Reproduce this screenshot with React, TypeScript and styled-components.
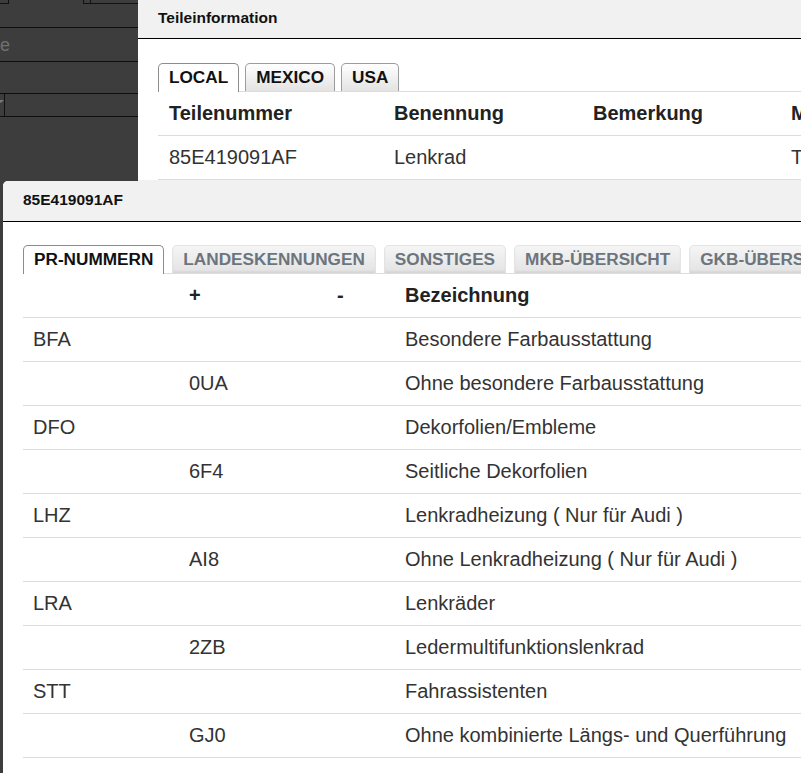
import React from "react";
import styled, { createGlobalStyle } from "styled-components";

const GlobalStyle = createGlobalStyle`
  html, body { margin: 0; padding: 0; }
  body {
    background: #3d3d3d;
    font-family: "Liberation Sans", Arial, sans-serif;
    overflow: hidden;
  }
`;

const Page = styled.div`
  position: relative;
  width: 801px;
  height: 773px;
  overflow: hidden;
  display: grid;
  grid-template-columns: 138px 760px;
  align-items: start;
`;

/* ---------- dimmed background app (left) ---------- */
const Sidebar = styled.div`
  display: flex;
  flex-direction: column;
`;

const SideRow = styled.div<{ $h: number }>`
  height: ${(p) => p.$h}px;
  border-bottom: 1px solid #0e0e0e;
  display: flex;
  align-items: center;
  position: relative;
`;

const TopStrip = styled.div`
  display: flex;
  height: 4px;
  align-self: flex-start;
  width: 100%;
`;

const StripBox = styled.div<{ $w: number; $ml?: number; $sides?: boolean }>`
  width: ${(p) => p.$w}px;
  margin-left: ${(p) => p.$ml ?? 0}px;
  border-bottom: 1px solid #111;
  border-right: ${(p) => (p.$sides ? "1px solid #111" : "none")};
  border-left: ${(p) => (p.$sides && p.$ml ? "1px solid #111" : "none")};
  flex: ${(p) => (p.$w === 0 ? 1 : "none")};
`;

const FadedText = styled.span`
  font-size: 18px;
  color: #707070;
  margin-top: 2px;
`;

const DropCell = styled.div`
  width: 4px;
  height: 100%;
  border-right: 1px solid #111;
  display: flex;
  align-items: center;
  overflow: hidden;
`;

const DropArrow = styled.div`
  width: 0;
  height: 0;
  border-left: 3px solid transparent;
  border-right: 3px solid transparent;
  border-top: 3px solid #777;
  margin-left: -2px;
  margin-top: -8px;
`;

/* ---------- panels ---------- */
const InfoPanel = styled.section`
  background: #f1f1f1;
  height: 773px;
  display: flex;
  flex-direction: column;
`;

const PanelHeader = styled.header<{ $h: number }>`
  height: ${(p) => p.$h}px;
  line-height: ${(p) => p.$h - 2}px;
  background: #f1f1f1;
  border-bottom: 1px solid #000;
  padding-left: 20px;
  font-size: 15.5px;
  font-weight: bold;
  color: #111;
  flex: none;
`;

const PanelBody = styled.div<{ $top: number }>`
  background: #fff;
  padding: ${(p) => p.$top}px 0 0 20px;
`;

const PanelFooter = styled.div`
  flex: 1;
  background: #f1f1f1;
`;

const Dialog = styled.section`
  position: absolute;
  top: 181px;
  left: 3px;
  width: 900px;
  bottom: 0;
  background: #fff;
  border-radius: 5px 0 0 0;
  overflow: hidden;
  display: flex;
  flex-direction: column;
`;

/* ---------- tabs ---------- */
const TabBar = styled.div<{ $gap: number }>`
  display: flex;
  align-items: flex-end;
  gap: ${(p) => p.$gap}px;
  height: 28px;
  border-bottom: 1px solid #dcdcdc;
`;

type Tone = "bordered" | "muted";

const Tab = styled.div<{ $active?: boolean; $tone: Tone }>`
  box-sizing: border-box;
  height: ${(p) => (p.$active ? 29 : 28)}px;
  margin-bottom: ${(p) => (p.$active ? -1 : 0)}px;
  padding: 0 10px;
  line-height: 27px;
  font-size: 17.2px;
  font-weight: bold;
  white-space: nowrap;
  border-radius: 5px 5px 0 0;
  border: 1px solid
    ${(p) => (p.$active ? "#8c8c8c" : p.$tone === "bordered" ? "#9c9c9c" : "#e4e4e4")};
  border-bottom: none;
  color: ${(p) => (p.$active ? "#111" : p.$tone === "bordered" ? "#111" : "#6c757d")};
  background: ${(p) =>
    p.$active
      ? "#fff"
      : p.$tone === "bordered"
      ? "linear-gradient(#ffffff, #e3e3e3)"
      : "linear-gradient(#f5f5f5, #e3e3e3)"};
  box-shadow: ${(p) =>
    p.$active || p.$tone === "bordered" ? "none" : "inset 0 -2px 2px rgba(0,0,0,0.06)"};
`;

/* ---------- tables ---------- */
const Row = styled.div<{ $cols: string; $head?: boolean }>`
  display: grid;
  grid-template-columns: ${(p) => p.$cols};
  height: 44px;
  box-sizing: border-box;
  border-bottom: 1px solid #dcdcdc;
  align-items: center;
  font-size: 20px;
  font-weight: ${(p) => (p.$head ? "bold" : "normal")};
  color: ${(p) => (p.$head ? "#222" : "#333")};
`;

const Cell = styled.div<{ $pad: number }>`
  padding-left: ${(p) => p.$pad}px;
  white-space: nowrap;
  overflow: hidden;
`;

const infoCols = "225px 199px 198px 1fr";
const prCols = "156px 148px 68px 1fr";

const prRows: [string, string, string, string][] = [
  ["BFA", "", "", "Besondere Farbausstattung"],
  ["", "0UA", "", "Ohne besondere Farbausstattung"],
  ["DFO", "", "", "Dekorfolien/Embleme"],
  ["", "6F4", "", "Seitliche Dekorfolien"],
  ["LHZ", "", "", "Lenkradheizung ( Nur für Audi )"],
  ["", "AI8", "", "Ohne Lenkradheizung ( Nur für Audi )"],
  ["LRA", "", "", "Lenkräder"],
  ["", "2ZB", "", "Ledermultifunktionslenkrad"],
  ["STT", "", "", "Fahrassistenten"],
  ["", "GJ0", "", "Ohne kombinierte Längs- und Querführung"],
];

export default function App() {
  return (
    <>
      <GlobalStyle />
      <Page>
        <Sidebar>
          <SideRow $h={27}>
            <TopStrip>
              <StripBox $w={8} $sides />
              <StripBox $w={6} $ml={74} $sides />
              <StripBox $w={0} />
            </TopStrip>
          </SideRow>
          <SideRow $h={33}>
            <FadedText>e</FadedText>
          </SideRow>
          <SideRow $h={31} />
          <SideRow $h={22}>
            <DropCell>
              <DropArrow />
            </DropCell>
          </SideRow>
        </Sidebar>

        <InfoPanel>
          <PanelHeader $h={38}>Teileinformation</PanelHeader>
          <PanelBody $top={24}>
            <TabBar $gap={6}>
              <Tab $active $tone="bordered">LOCAL</Tab>
              <Tab $tone="bordered">MEXICO</Tab>
              <Tab $tone="bordered">USA</Tab>
            </TabBar>
            <Row $cols={infoCols} $head>
              <Cell $pad={11}>Teilenummer</Cell>
              <Cell $pad={11}>Benennung</Cell>
              <Cell $pad={11}>Bemerkung</Cell>
              <Cell $pad={11}>Menge</Cell>
            </Row>
            <Row $cols={infoCols}>
              <Cell $pad={11}>85E419091AF</Cell>
              <Cell $pad={11}>Lenkrad</Cell>
              <Cell $pad={11}></Cell>
              <Cell $pad={11}>TN</Cell>
            </Row>
          </PanelBody>
          <PanelFooter />
        </InfoPanel>

        <Dialog>
          <PanelHeader $h={40}>85E419091AF</PanelHeader>
          <PanelBody $top={23}>
            <TabBar $gap={8}>
              <Tab $active $tone="muted">PR-NUMMERN</Tab>
              <Tab $tone="muted">LANDESKENNUNGEN</Tab>
              <Tab $tone="muted">SONSTIGES</Tab>
              <Tab $tone="muted">MKB-ÜBERSICHT</Tab>
              <Tab $tone="muted">GKB-ÜBERSICHT</Tab>
            </TabBar>
            <Row $cols={prCols} $head>
              <Cell $pad={10}></Cell>
              <Cell $pad={10}>+</Cell>
              <Cell $pad={10}>-</Cell>
              <Cell $pad={10}>Bezeichnung</Cell>
            </Row>
            {prRows.map((r, i) => (
              <Row key={i} $cols={prCols}>
                {r.map((c, j) => (
                  <Cell key={j} $pad={10}>
                    {c}
                  </Cell>
                ))}
              </Row>
            ))}
          </PanelBody>
        </Dialog>
      </Page>
    </>
  );
}
